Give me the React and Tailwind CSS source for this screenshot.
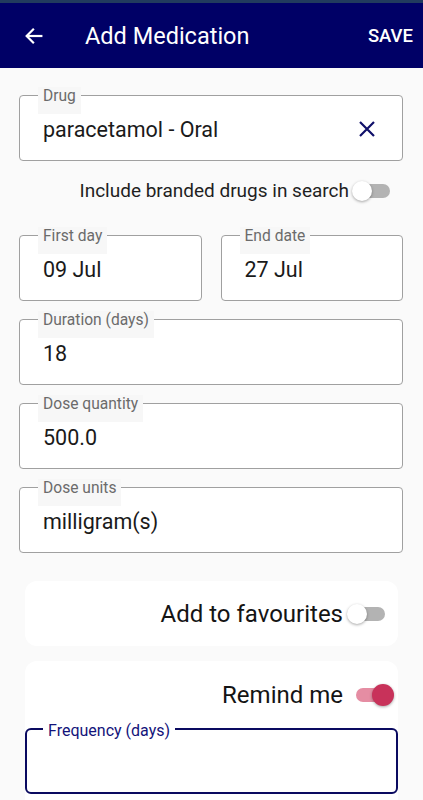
import React from "react";

const font = { fontFamily: "Roboto, 'Noto Sans', sans-serif" };

function Field({ label, value, className = "", right }) {
  return (
    <div className={`relative h-[66px] rounded-[4px] border border-[#a0a0a0] bg-white ${className}`}>
      <div className="absolute left-[18px] top-[-9px] h-[27px] bg-[#f7f7f7] px-[5px] text-[15.6px] leading-[18px] text-[#6b6b6b]">
        {label}
      </div>
      <div className="flex h-full items-center pl-[23px] pr-[26px] pt-[5px]">
        <span className="flex-1 text-[21.5px] text-[#1a1a1a]">{value}</span>
        {right}
      </div>
    </div>
  );
}

function Toggle({ on }) {
  if (on) {
    return (
      <div className="relative h-[22px] w-[38px]">
        <div className="absolute left-0 top-[4px] h-[14px] w-[34px] rounded-full bg-[#e58da3]" />
        <div className="absolute right-0 top-0 h-[22px] w-[22px] rounded-full bg-[#c8325a] shadow-[0_1px_3px_rgba(0,0,0,0.35)]" />
      </div>
    );
  }
  return (
    <div className="relative h-[22px] w-[38px]">
      <div className="absolute right-0 top-[4px] h-[14px] w-[32px] rounded-full bg-[#b3b3b3]" />
      <div className="absolute left-0 top-[1px] h-[20px] w-[20px] rounded-full bg-white shadow-[0_1px_3px_rgba(0,0,0,0.35)]" />
    </div>
  );
}

export default function App() {
  return (
    <div style={font} className="h-[800px] w-[423px] overflow-hidden bg-[#fafafa]">
      <div className="h-[3px] bg-[#213b5e]" />
      <div className="flex h-[65px] items-center bg-[#000066] pt-[3px] text-white">
        <svg width="22" height="22" viewBox="0 0 24 24" className="ml-[23px] mt-[-2px]" fill="none" stroke="white" strokeWidth="2.4" strokeLinecap="square">
          <path d="M20 12H5" />
          <path d="M11 5l-7 7 7 7" />
        </svg>
        <div className="ml-[40px] flex-1 text-[23.5px] font-normal">Add Medication</div>
        <div className="mr-[10px] text-[18.5px] font-medium">SAVE</div>
      </div>

      <div className="px-[19px] pr-[20px] pt-[27px]">
        <Field
          label="Drug"
          value="paracetamol - Oral"
          right={
            <svg width="18" height="18" viewBox="0 0 18 18" stroke="#10106a" strokeWidth="2.2" className="mt-[-4px]">
              <path d="M2 2l14 14M16 2L2 16" />
            </svg>
          }
        />
        <div className="flex h-[58px] items-center justify-end gap-[3px] pr-[13px] pt-[2px]">
          <span className="text-[19px] text-[#1f1f1f]">Include branded drugs in search</span>
          <Toggle on={false} />
        </div>
        <div className="mt-[16px] flex gap-[19px]">
          <Field label="First day" value="09 Jul" className="flex-1" />
          <Field label="End date" value="27 Jul" className="flex-1" />
        </div>
        <Field label="Duration (days)" value="18" className="mt-[18px]" />
        <Field label="Dose quantity" value="500.0" className="mt-[18px]" />
        <Field label="Dose units" value="milligram(s)" className="mt-[18px]" />
      </div>

      <div className="px-[25px] pt-[28px]">
        <div className="flex h-[65px] items-center justify-end gap-[4px] rounded-[12px] bg-white pr-[13px]">
          <span className="text-[24px] text-[#141414]">Add to favourites</span>
          <Toggle on={false} />
        </div>
        <div className="mt-[15px] rounded-[12px] bg-white pb-[20px]">
          <div className="flex h-[67px] items-center justify-end gap-[13px] pr-[4px]">
            <span className="text-[24px] text-[#141414]">Remind me</span>
            <Toggle on={true} />
          </div>
          <div className="relative h-[66px] rounded-[6px] border-2 border-[#0a0a60]">
            <div className="absolute left-[16px] top-[-8px] bg-white px-[5px] text-[16px] leading-[18px] text-[#13137a]">
              Frequency (days)
            </div>
          </div>
        </div>
      </div>
    </div>
  );
}
